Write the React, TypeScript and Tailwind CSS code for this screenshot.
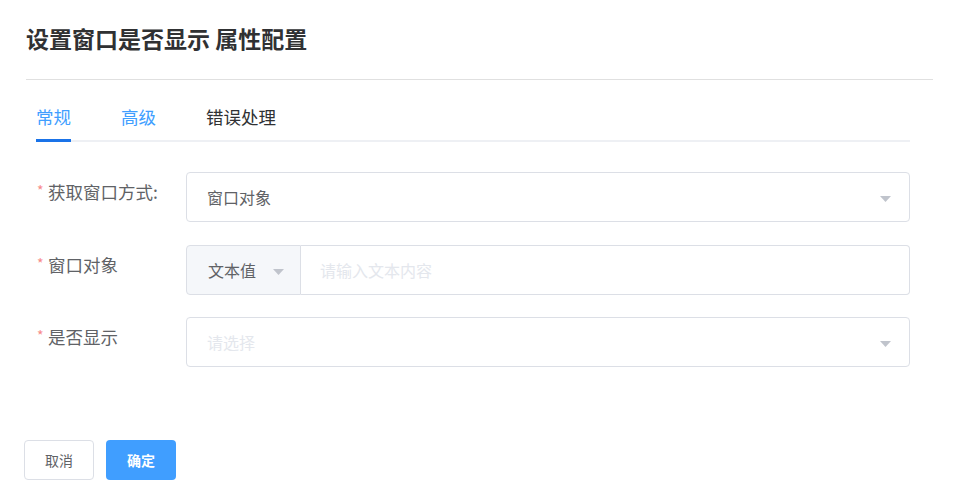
import React, { useState } from "react";

const font = '"Noto Sans CJK SC", "Noto Sans", sans-serif';

const Caret = () => (
  <svg width="11" height="6" viewBox="0 0 11 6" className="shrink-0">
    <path d="M0 0 L11 0 L5.5 6 Z" fill="#c0c4cc" />
  </svg>
);

const Label = ({ text }: { text: string }) => (
  <div className="w-[150px] shrink-0 flex items-start h-[40px] leading-[40px]">
    <span className="text-[#f78989] text-[14px] w-[12px] pl-[1px] -mt-[2px]">*</span>
    <span className="text-[17.5px] text-[#606266]">{text}</span>
  </div>
);

export default function App() {
  const [tab, setTab] = useState("常规");
  const tabs = ["常规", "高级", "错误处理"];

  return (
    <div className="w-[958px] h-[504px] bg-white" style={{ fontFamily: font }}>
      <div className="pl-[26px] pr-[25px]">
        <div className="pt-[21px] pb-[23px] border-b border-[#e0e0e0]">
          <h1 className="text-[23px] leading-[35px] font-bold text-[#303133]">
            设置窗口是否显示 属性配置
          </h1>
        </div>

        <div className="pl-[10px] pr-[23px]">
          {/* tabs */}
          <div className="relative mt-[20px] h-[42px] border-b-2 border-[#eef0f4] flex gap-[50px]">
            {tabs.map((t, i) => (
              <div
                key={t}
                onClick={() => setTab(t)}
                className={`relative h-[40px] leading-[34px] text-[17.5px] cursor-pointer ${
                  i < 2 ? "text-[#409eff]" : "text-[#303133]"
                }`}
              >
                {t}
                {tab === t && (
                  <div className="absolute left-0 right-0 -bottom-[2px] h-[3px] bg-[#1a73e8]" />
                )}
              </div>
            ))}
          </div>

          {/* form */}
          <div className="mt-[30px]">
            <div className="flex mb-[23px]">
              <Label text="获取窗口方式:" />
              <div className="flex-1 h-[50px] border border-[#dcdfe6] rounded-[4px] flex items-center pl-[20px] pr-[18px]">
                <span className="flex-1 text-[16px] text-[#606266]">窗口对象</span>
                <div className="mt-[4px]">
                  <Caret />
                </div>
              </div>
            </div>

            <div className="flex mb-[22px]">
              <Label text="窗口对象" />
              <div className="flex-1 h-[50px] flex">
                <div className="w-[115px] h-full bg-[#f5f7fa] border border-[#dcdfe6] rounded-l-[4px] flex items-center pl-[21px] gap-[17px]">
                  <span className="text-[16px] text-[#606266]">文本值</span>
                  <div className="mt-[3px]">
                    <Caret />
                  </div>
                </div>
                <div className="flex-1 h-full border border-l-0 border-[#dcdfe6] rounded-r-[4px] flex items-center pl-[19px]">
                  <span className="text-[16px] text-[#e4e7ed]">请输入文本内容</span>
                </div>
              </div>
            </div>

            <div className="flex">
              <Label text="是否显示" />
              <div className="flex-1 h-[50px] border border-[#dcdfe6] rounded-[4px] flex items-center pl-[20px] pr-[18px]">
                <span className="flex-1 text-[16px] text-[#e4e7ed]">请选择</span>
                <div className="mt-[4px]">
                  <Caret />
                </div>
              </div>
            </div>
          </div>
        </div>
      </div>

      {/* footer */}
      <div className="pl-[24px] mt-[73px] flex gap-[12px]">
        <button className="w-[70px] h-[40px] border border-[#dcdfe6] rounded-[4px] text-[14px] text-[#606266] bg-white">
          取消
        </button>
        <button className="w-[70px] h-[40px] rounded-[4px] text-[14px] font-semibold text-white bg-[#409eff]">
          确定
        </button>
      </div>
    </div>
  );
}
